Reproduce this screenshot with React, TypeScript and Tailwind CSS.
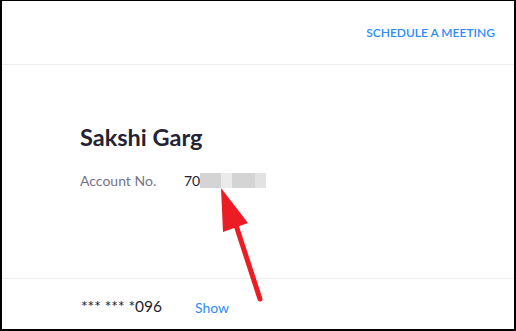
import React from 'react';

function Arrow() {
  return (
    <svg className="absolute left-0 top-0 pointer-events-none" width="516" height="331" viewBox="0 0 516 331">
      <line x1="258" y1="298" x2="232" y2="218" stroke="#ed1c24" strokeWidth="5" strokeLinecap="round" />
      <polygon points="219,187 221,231 246,222" fill="#ed1c24" />
    </svg>
  );
}

export default function App() {
  return (
    <div
      className="relative w-[516px] h-[331px] bg-white border-l-2 border-t border-r-2 border-b-2 border-black flex flex-col"
      style={{ fontFamily: 'Lato, "Open Sans", sans-serif' }}
    >
      {/* Header */}
      <div className="h-[64px] flex items-center justify-end pr-[19px] border-b border-[#ececec]">
        <a className="text-[12px] font-semibold text-[#2d8cff] uppercase mt-[1px]">
          Schedule a Meeting
        </a>
      </div>

      {/* Account info */}
      <div className="flex-1 pl-[78px] pt-[61px] border-b border-[#ececec]">
        <h2 className="text-[23.5px] font-bold text-[#232333] leading-none">Sakshi Garg</h2>
        <div className="flex items-center mt-[20px] text-[14px]">
          <span className="w-[104px] text-[#747487]">Account No.</span>
          <span className="text-[#232333]">70</span>
          <span className="flex h-[15px]">
            <span className="w-[21px] bg-[#d4d4d4]" />
            <span className="w-[11px] bg-[#ebebeb]" />
            <span className="w-[23px] bg-[#d4d4d4]" />
            <span className="w-[11px] bg-[#e2e2e2]" />
          </span>
        </div>
      </div>

      {/* Phone */}
      <div className="h-[50px] flex items-center pl-[79px] pt-[6px]">
        <span className="w-[114px] text-[15.5px] text-[#232333]">*** *** *096</span>
        <a className="text-[14px] text-[#2d8cff]">Show</a>
      </div>

      <Arrow />
    </div>
  );
}
